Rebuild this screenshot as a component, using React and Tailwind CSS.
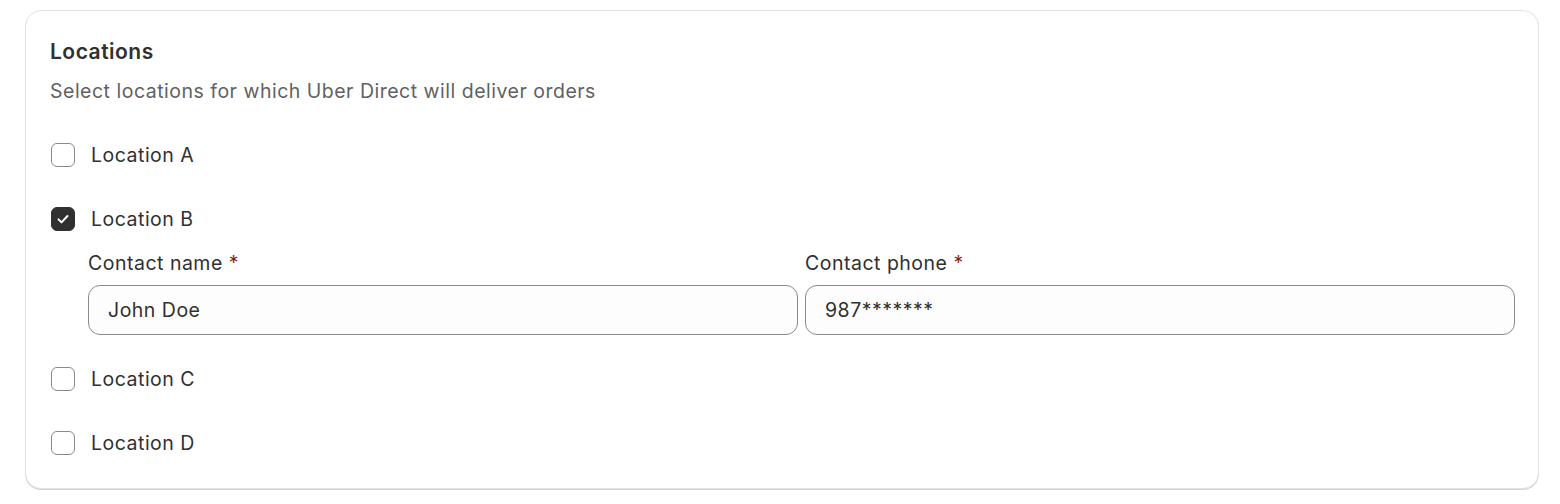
import React, { useState } from "react";

const font = { fontFamily: "Inter, 'Noto Sans', sans-serif" };

const Checkbox = ({ checked, onChange, label }) => (
    <label className="flex items-center gap-[16px] cursor-pointer select-none">
        <span
            onClick={onChange}
            className={`w-[24px] h-[24px] rounded-[6px] flex items-center justify-center ${
                checked ? "bg-[#303030] border border-[#303030]" : "bg-white border border-[#8a8a8a]"
            }`}
        >
            {checked && (
                <svg width="16" height="16" viewBox="0 0 16 16" fill="none">
                    <path d="M3.5 8.4l3 3L12.5 5" stroke="white" strokeWidth="2" strokeLinecap="round" strokeLinejoin="round" />
                </svg>
            )}
        </span>
        <span className="text-[19.5px] leading-[24px] tracking-[0.5px] text-[#303030]">{label}</span>
    </label>
);

const Field = ({ label, value }) => (
    <div className="flex-1 flex flex-col">
        <div className="text-[19.5px] leading-[27px] tracking-[0.5px] text-[#303030] mb-[8px]">
            {label} <span className="text-[#8e1f0b]">*</span>
        </div>
        <input
            defaultValue={value}
            className="h-[50px] w-full rounded-[12px] border border-[#8a8a8a] bg-[#fdfdfd] px-[19px] text-[19.5px] tracking-[0.5px] text-[#303030] outline-none"
        />
    </div>
);

export default function App() {
    const [checked, setChecked] = useState({ A: false, B: true, C: false, D: false });
    const toggle = (k) => setChecked((prev) => ({ ...prev, [k]: !prev[k] }));

    return (
        <div className="bg-white min-h-screen pt-[10px] pl-[25px] pr-[21px]" style={font}>
            <div className="rounded-[16px] border border-[#e3e3e3] shadow-[0_1px_0_0_#d4d4d4] bg-white pt-[26px] pl-[24px] pr-[23px] h-[479px]">
                <h2 className="text-[21px] leading-[30px] tracking-[0.5px] font-semibold text-[#303030]">Locations</h2>
                <p className="mt-[9px] text-[19.5px] leading-[30px] tracking-[0.5px] text-[#616161]">
                    Select locations for which Uber Direct will deliver orders
                </p>

                <div className="mt-[37px] ml-[1px] flex flex-col">
                    <Checkbox label="Location A" checked={checked.A} onChange={() => toggle("A")} />
                    <div className="mt-[40px]">
                        <Checkbox label="Location B" checked={checked.B} onChange={() => toggle("B")} />
                    </div>
                    {checked.B && (
                        <div className="mt-[19px] ml-[37px] flex gap-[7px]">
                            <Field label="Contact name" value="John Doe" />
                            <Field label="Contact phone" value="987*******" />
                        </div>
                    )}
                    <div className="mt-[32px]">
                        <Checkbox label="Location C" checked={checked.C} onChange={() => toggle("C")} />
                    </div>
                    <div className="mt-[40px]">
                        <Checkbox label="Location D" checked={checked.D} onChange={() => toggle("D")} />
                    </div>
                </div>
            </div>
        </div>
    );
}
